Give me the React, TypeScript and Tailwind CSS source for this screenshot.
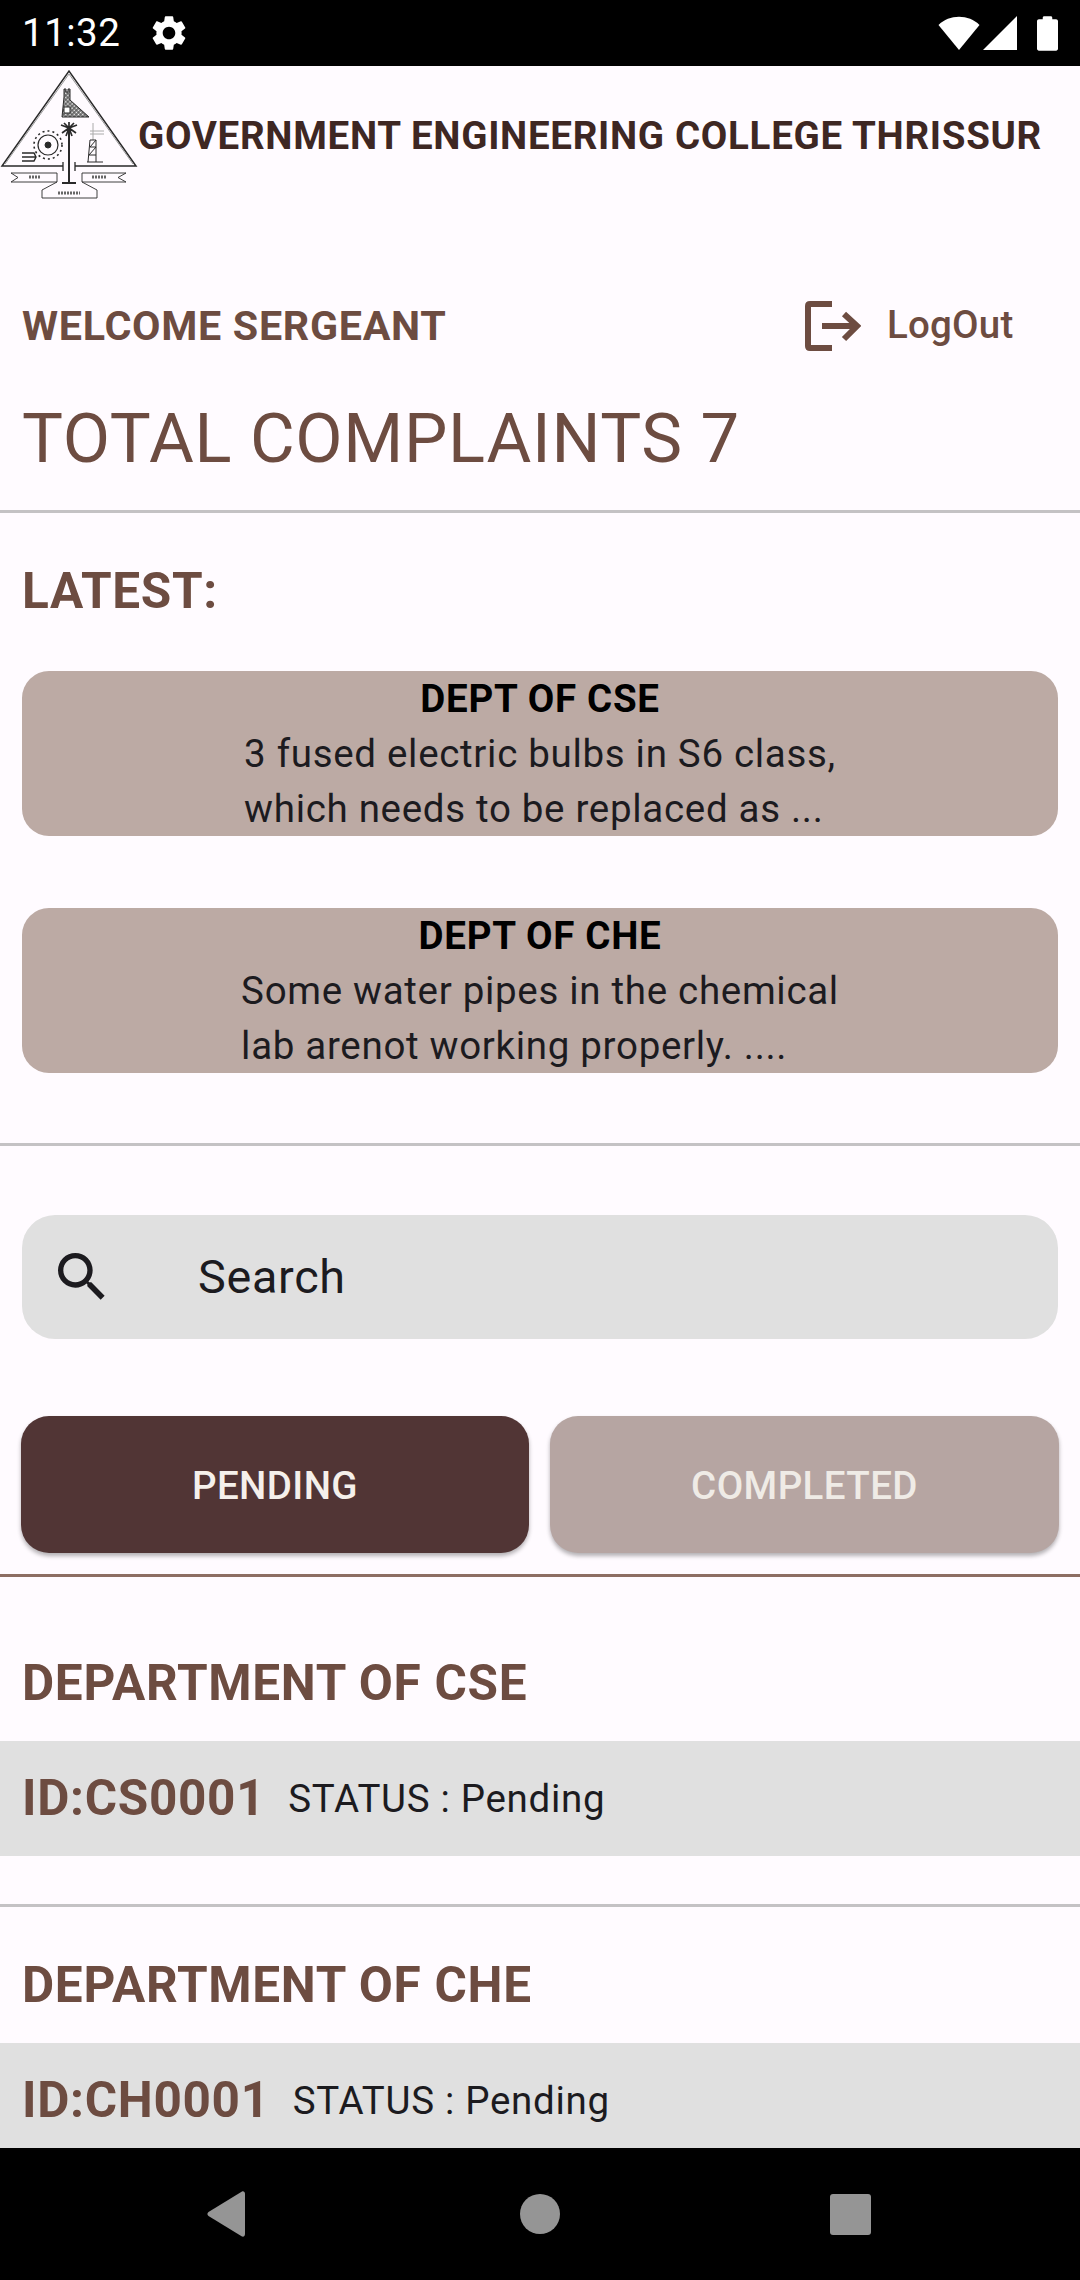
const Logo = () => (
  <svg width="138" height="136" viewBox="0 66 138 136" fill="none" stroke="#2a2a2a" strokeWidth="1" className="shrink-0">
    <defs>
      <pattern id="hatch" width="3" height="3" patternUnits="userSpaceOnUse" patternTransform="rotate(45)">
        <rect width="3" height="3" fill="#fff" />
        <path d="M0 0 V3" stroke="#777" strokeWidth="1.2" />
      </pattern>
    </defs>
    {/* triangle */}
    <path d="M63 166 H2 L69 71 L136 166 H75" strokeWidth="1.5" />
    <path d="M5 164 L69 74 L133 164" stroke="#999" />
    <path d="M63 162 V171 M75 162 V171" strokeWidth="1.3" />
    {/* dam */}
    <path d="M64 89 H66 V92 H68 V89 H70 V100 L89 117 H62 L64 97 Z" fill="url(#hatch)" />
    <rect x="64" y="107" width="6" height="6" fill="#fff" />
    {/* palm */}
    <path d="M69 127 V183 M62 183 H76" strokeWidth="2" />
    <path d="M69 128 L61 125 M69 128 L77 125 M69 128 L62 133 M69 128 L76 133 M69 128 V122 M69 128 L64 123 M69 128 L74 123 M69 128 L66 136 M69 128 L72 136" strokeWidth="1.7" />
    {/* gear */}
    <circle cx="48" cy="145" r="10" strokeWidth="1.2" />
    <circle cx="48" cy="145" r="14" strokeDasharray="2 3" strokeWidth="1.6" />
    <circle cx="48" cy="145" r="3" fill="#2a2a2a" />
    {/* trident */}
    <path d="M22 153 H34 L36 157 L34 161 H22 M22 157 H36" strokeWidth="1.4" />
    {/* tower */}
    <path d="M93 123 V140 M90 131 H104 M90 134 H104" stroke="#aaa" />
    <path d="M90 140 H96 V162 M90 140 L88 162 M90 147 L96 140 M90 147 H96 M89 155 L96 147 M89 155 H96 M87 162 H103" />
    {/* ribbons */}
    <path d="M57 173 H11 L18 177.5 L11 182 H57 Z M82 173 H126 L118 177.5 L126 182 H82 Z" strokeWidth="0.9" />
    <path d="M57 182 L42 190 V198 H97 V190 L82 182" strokeWidth="0.9" />
    <path d="M29 177 H41 M92 177 H107 M58 193 H80" strokeWidth="3" strokeDasharray="2 1" stroke="#666" />
  </svg>
);

const Divider = ({ color = "bg-[#c4c2c4]", h = "h-[3px]" }: { color?: string; h?: string }) => (
  <div className={`${h} ${color} w-full`} />
);

const LatestCard = ({ dept, lines }: { dept: string; lines: string[] }) => (
  <div className="mx-[22px] h-[165px] pt-[1px] rounded-[27px] bg-[#bcaaa4] flex flex-col items-center overflow-hidden tracking-[0.69px]">
    <div className="text-[38.5px] leading-[54px] font-bold text-black">{dept}</div>
    <div className="text-[38.5px] leading-[55px] text-[#1c1b1f]">
      {lines.map((l) => (
        <div key={l}>{l}</div>
      ))}
    </div>
  </div>
);

const Department = ({ name, id, rowH }: { name: string; id: string; rowH: string }) => (
  <div>
    <div className="text-[#6d4c41] text-[49.5px] leading-[58px] font-bold px-[22px] tracking-[0.69px]">{name}</div>
    <div className={`${rowH} mt-[29px] bg-[#e0e0e0] overflow-hidden`}>
      <div className="h-[115px] flex items-center pl-[22px]">
        <span className="text-[49.5px] font-bold text-[#6d4c41] tracking-[0.69px]">{id}</span>
        <span className="ml-[23px] text-[38.5px] text-[#1c1b1f] tracking-[0.69px]">STATUS : Pending</span>
      </div>
    </div>
  </div>
);

export default function App() {
  return (
    <div className="w-[1080px] h-[2280px] bg-[#fffbff] flex flex-col overflow-hidden font-['Roboto',sans-serif]">
      {/* status bar */}
      <div className="h-[66px] bg-black flex items-center justify-between pl-[22px] pr-[22px] shrink-0">
        <div className="flex items-center gap-[28px]">
          <span className="text-white text-[38.5px] leading-none font-normal tracking-[0.5px]">11:32</span>
          <svg width="42" height="42" viewBox="0 0 24 24" fill="#fff">
            <path d="M19.14 12.94c.04-.3.06-.61.06-.94 0-.32-.02-.64-.07-.94l2.03-1.58a.49.49 0 0 0 .12-.61l-1.92-3.32a.488.488 0 0 0-.59-.22l-2.39.96c-.5-.38-1.03-.7-1.62-.94l-.36-2.54a.484.484 0 0 0-.48-.41h-3.84c-.24 0-.43.17-.47.41l-.36 2.54c-.59.24-1.13.57-1.62.94l-2.39-.96c-.22-.08-.47 0-.59.22L2.74 8.87c-.12.21-.08.47.12.61l2.03 1.58c-.05.3-.09.63-.09.94s.02.64.07.94l-2.03 1.58a.49.49 0 0 0-.12.61l1.92 3.32c.12.22.37.29.59.22l2.39-.96c.5.38 1.03.7 1.62.94l.36 2.54c.05.24.24.41.48.41h3.84c.24 0 .44-.17.47-.41l.36-2.54c.59-.24 1.13-.56 1.62-.94l2.39.96c.22.08.47 0 .59-.22l1.92-3.32c.12-.22.07-.47-.12-.61l-2.01-1.58zM12 15.6c-1.98 0-3.6-1.62-3.6-3.6s1.62-3.6 3.6-3.6 3.6 1.62 3.6 3.6-1.62 3.6-3.6 3.6z" />
          </svg>
        </div>
        <div className="flex items-center">
          <svg width="42" height="34" viewBox="0 0 42 34" fill="#fff">
            <path d="M0.5 9 C11 -2 31 -2 41.5 9 L21 34 Z" />
          </svg>
          <svg width="34" height="34" viewBox="0 0 34 34" fill="#fff" className="ml-[3px]">
            <path d="M34 0 V34 H0 Z" />
          </svg>
          <svg width="21" height="35" viewBox="0 0 22 36" fill="#fff" className="ml-[20px]">
            <path d="M6 3 V1.5 C6 .7 6.7 0 7.5 0 H14.5 C15.3 0 16 .7 16 1.5 V3 H20 C21 3 22 4 22 5 V34 C22 35 21 36 20 36 H2 C1 36 0 35 0 34 V5 C0 4 1 3 2 3 Z" />
          </svg>
        </div>
      </div>

      {/* college header */}
      <div className="h-[136px] flex items-center shrink-0">
        <Logo />
        <span className="mt-[3px] text-[#3e2723] text-[38.5px] font-bold tracking-[0.69px] whitespace-nowrap">
          GOVERNMENT ENGINEERING COLLEGE THRISSUR
        </span>
      </div>

      {/* welcome row */}
      <div className="mt-[94px] h-[60px] flex items-center pl-[22px] shrink-0">
        <span className="w-[783px] pt-[2px] text-[41.25px] font-bold text-[#6d4c41] tracking-[0.69px]">WELCOME SERGEANT</span>
        <svg width="56" height="50" viewBox="0 0 56 50" fill="none" stroke="#6d4c41" strokeWidth="6" className="mr-[26px]">
          <path d="M27 3 H5 Q3 3 3 5 V45 Q3 47 5 47 H27" />
          <path d="M17 25 H51 M39 13 L52 25 L39 38" />
        </svg>
        <span className="pb-[2px] text-[38.5px] font-medium text-[#6d4c41] tracking-[0.2px]">LogOut</span>
      </div>

      <div className="mt-[44px] px-[22px] text-[68.75px] leading-[78px] text-[#6d4c41] tracking-[0.69px] shrink-0">
        TOTAL COMPLAINTS 7
      </div>

      <div className="mt-[32px] shrink-0">
        <Divider />
      </div>

      <div className="mt-[49px] px-[22px] text-[49.5px] leading-[58px] font-bold text-[#6d4c41] tracking-[0.69px] shrink-0">LATEST:</div>

      <div className="mt-[51px] flex flex-col gap-[72px] shrink-0">
        <LatestCard dept="DEPT OF CSE" lines={["3 fused electric bulbs in S6 class,", "which needs to be replaced as ..."]} />
        <LatestCard dept="DEPT OF CHE" lines={["Some water pipes in the chemical", "lab arenot working properly. ...."]} />
      </div>

      <div className="mt-[70px] shrink-0">
        <Divider />
      </div>

      {/* search */}
      <div className="mt-[69px] mx-[22px] h-[124px] rounded-[33px] bg-[#e0e0e0] flex items-center pl-[28px] shrink-0">
        <svg width="64" height="64" viewBox="0 0 24 24" fill="#1c1b1f">
          <path d="M15.5 14h-.79l-.28-.27A6.471 6.471 0 0 0 16 9.5 6.5 6.5 0 1 0 9.5 16c1.61 0 3.09-.59 4.23-1.57l.27.28v.79l5 4.99L20.49 19l-4.99-5zm-6 0C7.01 14 5 11.99 5 9.5S7.01 5 9.5 5 14 7.01 14 9.5 11.99 14 9.5 14z" />
        </svg>
        <span className="ml-[84px] text-[46.75px] text-[#1c1b1f] tracking-[0.69px]">Search</span>
      </div>

      {/* tabs */}
      <div className="mt-[77px] pl-[21px] flex gap-[21px] shrink-0">
        <div className="w-[508px] h-[137px] pt-[2px] rounded-[28px] bg-[#513535] text-[#f5f0eb] shadow-[0_3px_4px_rgba(0,0,0,0.3)] flex items-center justify-center text-[38.5px] font-medium tracking-[0.4px]">
          PENDING
        </div>
        <div className="w-[509px] h-[137px] pt-[2px] rounded-[28px] bg-[#b6a5a2] text-[#efebe6] shadow-[0_3px_4px_rgba(0,0,0,0.3)] flex items-center justify-center text-[38.5px] font-medium tracking-[0.4px]">
          COMPLETED
        </div>
      </div>

      <div className="mt-[21px] shrink-0">
        <Divider color="bg-[#8d6e63]" />
      </div>

      <div className="mt-[77px] shrink-0">
        <Department name="DEPARTMENT OF CSE" id="ID:CS0001" rowH="h-[115px]" />
      </div>

      <div className="mt-[48px] shrink-0">
        <Divider />
      </div>

      <div className="mt-[49px] shrink-0">
        <Department name="DEPARTMENT OF CHE" id="ID:CH0001" rowH="h-[105px]" />
      </div>

      {/* nav bar */}
      <div className="flex-1 bg-black flex items-center">
        <svg width="38" height="46" viewBox="0 0 38 46" fill="#959595" className="ml-[207px]">
          <path d="M35 0.5 C36.7 0 38 1 38 3 V43 C38 45 36.7 46 35 45.5 L1.5 25 C0 24 0 22 1.5 21 Z" />
        </svg>
        <div className="ml-[275px] w-[40px] h-[40px] rounded-full bg-[#959595]" />
        <div className="ml-[270px] w-[41px] h-[41px] rounded-[3px] bg-[#959595]" />
      </div>
    </div>
  );
}
